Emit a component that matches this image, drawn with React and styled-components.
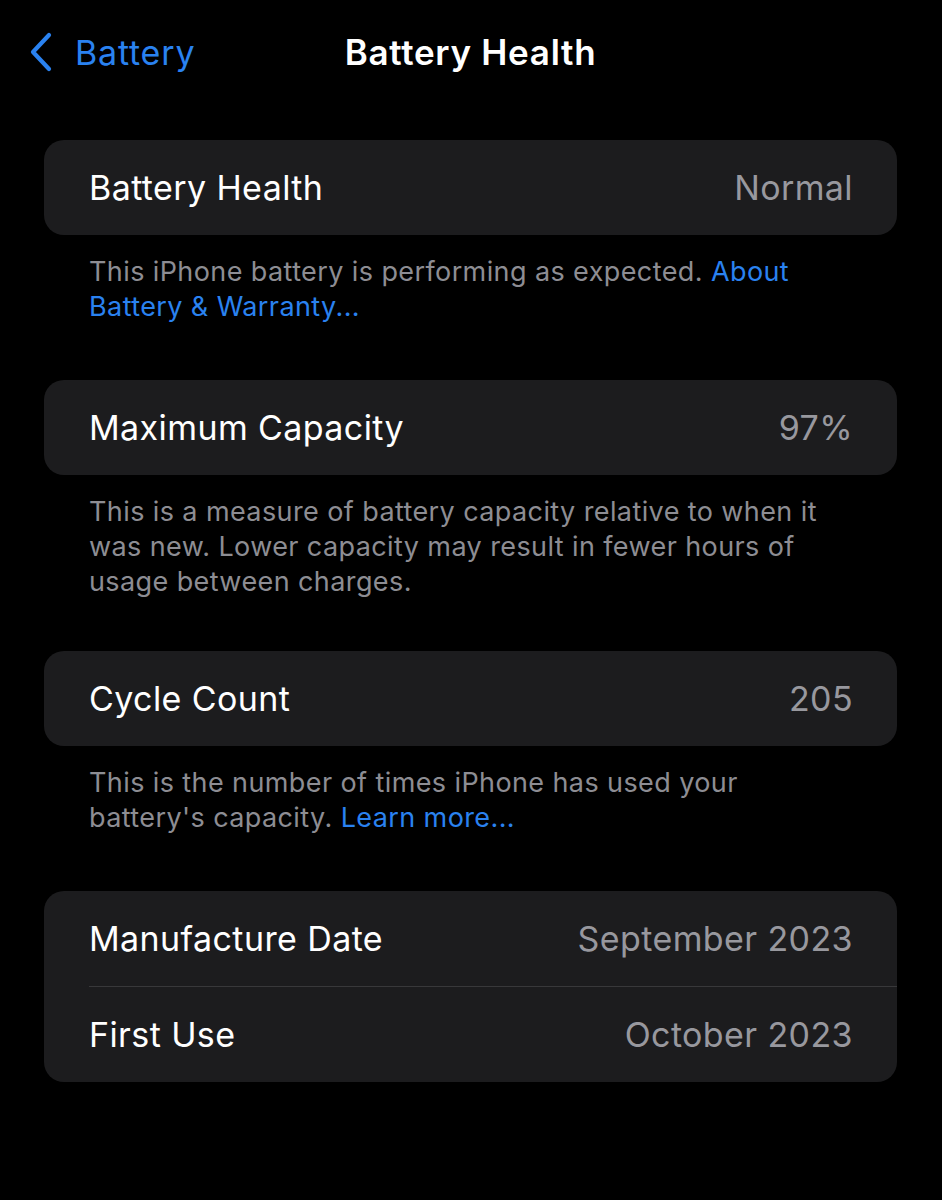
import React from "react";
import styled, { createGlobalStyle } from "styled-components";

const Global = createGlobalStyle`
  html, body { margin: 0; padding: 0; background: #000; }
  body { font-family: Inter, "Noto Sans", "Liberation Sans", sans-serif; -webkit-font-smoothing: antialiased; }
`;

const Page = styled.div`
  width: 942px;
  min-height: 1200px;
  background: #000;
  box-sizing: border-box;
  padding: 0 45px 0 44px;
`;

const NavBar = styled.div`
  position: relative;
  height: 106px;
  display: flex;
  align-items: center;
  margin: 0 -15px 34px;
`;

const Back = styled.div`
  display: flex;
  align-items: center;
  gap: 22px;
  color: #2a82f0;
  font-size: 34px;
  font-weight: 400;
  letter-spacing: 0.8px;
  margin-top: -2px;
`;

const Title = styled.div`
  position: absolute;
  left: 50%;
  top: 50%;
  transform: translate(-50%, calc(-50% - 1px));
  color: #fff;
  font-size: 35px;
  font-weight: 600;
  letter-spacing: 0.7px;
`;

const Card = styled.div`
  background: #1c1c1e;
  border-radius: 20px;
  overflow: hidden;
`;

const Row = styled.div`
  height: 95px;
  display: flex;
  align-items: center;
  justify-content: space-between;
  padding: 0 44px 0 45px;
  box-sizing: border-box;
`;

const Divider = styled.div`
  height: 1px;
  background: #38383a;
  margin-left: 45px;
`;

const Label = styled.span`
  color: #fff;
  font-size: 34px;
  letter-spacing: 0.4px;
`;

const Value = styled.span`
  color: #98989e;
  font-size: 34px;
  letter-spacing: 0.4px;
`;

const Footer = styled.p`
  margin: 0;
  padding: 19px 45px 0 45px;
  margin-bottom: ${(p) => p.$gap}px;
  color: #8d8d93;
  font-size: 27px;
  line-height: 35px;
  letter-spacing: 0.4px;
`;

const Link = styled.span`
  color: #2a82f0;
`;

const Chevron = () => (
  <svg width="24" height="40" viewBox="0 0 24 40" fill="none">
    <path d="M20 3 L4 20 L20 37" stroke="#2a82f0" strokeWidth="4.2" strokeLinecap="round" strokeLinejoin="round" />
  </svg>
);

export default function App() {
  return (
    <>
      <Global />
      <Page>
        <NavBar>
          <Back>
            <Chevron />
            <span>Battery</span>
          </Back>
          <Title>Battery Health</Title>
        </NavBar>
        <Card>
          <Row>
            <Label>Battery Health</Label>
            <Value>Normal</Value>
          </Row>
        </Card>
        <Footer $gap={56}>
          This iPhone battery is performing as expected. <Link>About</Link>
          <br />
          <Link>Battery &amp; Warranty...</Link>
        </Footer>
        <Card>
          <Row>
            <Label>Maximum Capacity</Label>
            <Value>97%</Value>
          </Row>
        </Card>
        <Footer $gap={52}>
          This is a measure of battery capacity relative to when it
          <br />
          was new. Lower capacity may result in fewer hours of
          <br />
          usage between charges.
        </Footer>
        <Card>
          <Row>
            <Label>Cycle Count</Label>
            <Value>205</Value>
          </Row>
        </Card>
        <Footer $gap={56}>
          This is the number of times iPhone has used your
          <br />
          battery's capacity. <Link>Learn more...</Link>
        </Footer>
        <Card>
          <Row>
            <Label>Manufacture Date</Label>
            <Value>September 2023</Value>
          </Row>
          <Divider />
          <Row>
            <Label>First Use</Label>
            <Value>October 2023</Value>
          </Row>
        </Card>
      </Page>
    </>
  );
}
